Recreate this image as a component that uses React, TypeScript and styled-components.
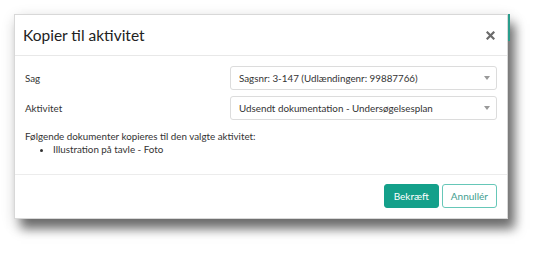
import { createGlobalStyle } from "styled-components";
import styled from "styled-components";

const GlobalStyle = createGlobalStyle`
  html, body {
    margin: 0;
    padding: 0;
    background: #ffffff;
  }
  body {
    font-family: Lato, "Open Sans", "Liberation Sans", sans-serif;
    color: #333333;
  }
`;

const Stage = styled.div`
  width: 543px;
  height: 255px;
  padding: 14px 0 0 14px;
  box-sizing: border-box;
`;

const Dialog = styled.div`
  position: relative;
  width: 494px;
  height: 205px;
  display: flex;
  flex-direction: column;
  background: #ffffff;
  border: 1px solid #d8d8d8;
  box-sizing: border-box;
  box-shadow: 7px 10px 10px rgba(0, 0, 0, 0.5), 2px 5px 14px rgba(0, 0, 0, 0.2);
`;

// sliver of the page behind the dialog
const BehindStrip = styled.div`
  position: absolute;
  top: -1px;
  right: -3px;
  width: 2px;
  height: 27px;
  background: #2a9d8c;
`;

const Header = styled.div`
  height: 41px;
  display: flex;
  align-items: center;
  justify-content: space-between;
  padding: 0 12px 0 8px;
  border-bottom: 1px solid #e8e8e8;
  box-sizing: border-box;
`;

const Title = styled.h4`
  margin: 0;
  font-size: 15.5px;
  font-weight: 400;
  color: #222222;
`;

const Close = styled.button`
  border: none;
  background: none;
  padding: 0;
  width: 10px;
  height: 10px;
  display: flex;
  align-items: center;
  justify-content: center;
  cursor: pointer;
`;

const Body = styled.div`
  flex: 1;
  padding: 10px 10px 0 10px;
  display: flex;
  flex-direction: column;
  font-size: 9.8px;
`;

const FieldRow = styled.div`
  display: flex;
  align-items: center;
  justify-content: space-between;
  margin-bottom: 6px;
`;

const Label = styled.label`
  color: #333333;
`;

const Select = styled.div`
  width: 267px;
  height: 24px;
  box-sizing: border-box;
  border: 1px solid #dcdcdc;
  border-radius: 3px;
  display: flex;
  align-items: center;
  justify-content: space-between;
  padding: 0 6px 0 8px;
  color: #333333;
`;

const Caret = styled.span`
  width: 0;
  height: 0;
  border-left: 3px solid transparent;
  border-right: 3px solid transparent;
  border-top: 4px solid #999999;
`;

const Info = styled.p`
  margin: 4px 0 0 0;
  line-height: 13px;
`;

const DocList = styled.ul`
  margin: 0;
  padding-left: 28px;
  line-height: 13px;
  list-style: disc;
`;

const Footer = styled.div`
  height: 44px;
  border-top: 1px solid #ececec;
  display: flex;
  align-items: center;
  justify-content: flex-end;
  gap: 3px;
  padding: 0 10px 1px 0;
  box-sizing: border-box;
`;

const Button = styled.button<{ primary?: boolean }>`
  height: 24px;
  padding: 0 ${(p) => (p.primary ? "9px" : "8px")};
  border-radius: 3px;
  font-family: inherit;
  font-size: 10px;
  cursor: pointer;
  border: 1px solid ${(p) => (p.primary ? "#14a08a" : "#66c7b8")};
  background: ${(p) => (p.primary ? "#14a08a" : "#ffffff")};
  color: ${(p) => (p.primary ? "#ffffff" : "#3f9e8f")};
`;

export default function App() {
  return (
    <Stage>
      <GlobalStyle />
      <Dialog>
        <BehindStrip />
        <Header>
          <Title>Kopier til aktivitet</Title>
          <Close aria-label="Luk">
            <svg width="9" height="9" viewBox="0 0 9 9">
              <path
                d="M1.5 1.5 L7.5 7.5 M7.5 1.5 L1.5 7.5"
                stroke="#6b6b6b"
                strokeWidth="2.2"
                strokeLinecap="square"
              />
            </svg>
          </Close>
        </Header>
        <Body>
          <FieldRow>
            <Label>Sag</Label>
            <Select>
              <span>Sagsnr: 3-147 (Udlændingenr: 99887766)</span>
              <Caret />
            </Select>
          </FieldRow>
          <FieldRow>
            <Label>Aktivitet</Label>
            <Select>
              <span>Udsendt dokumentation - Undersøgelsesplan</span>
              <Caret />
            </Select>
          </FieldRow>
          <Info>Følgende dokumenter kopieres til den valgte aktivitet:</Info>
          <DocList>
            <li>Illustration på tavle - Foto</li>
          </DocList>
        </Body>
        <Footer>
          <Button primary>Bekræft</Button>
          <Button>Annullér</Button>
        </Footer>
      </Dialog>
    </Stage>
  );
}
